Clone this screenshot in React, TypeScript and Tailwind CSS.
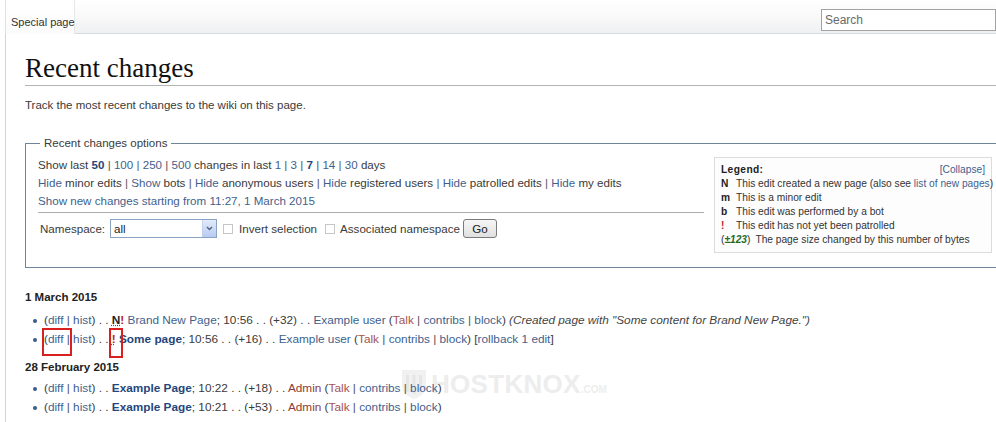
import React from "react";

const LINK = "text-[#3f5f8d]";
const BLINK = "text-[#25467a] font-bold";
const RED = "text-[#a5524f]";
const TXT = "text-[#3a3a3a]";

function Sep() {
  return <span className="text-[#555]"> | </span>;
}

function Bullet() {
  return <span className="absolute left-[8px] top-[8px] w-[4px] h-[4px] rounded-full bg-[#3b5b88]" />;
}

function ChangeItem({ children }: { children: React.ReactNode }) {
  return (
    <li className="relative pl-[19px] leading-[19px] whitespace-nowrap">
      <Bullet />
      {children}
    </li>
  );
}

function UserLinks({ user, red }: { user: string; red?: boolean }) {
  return (
    <>
      <span className={red ? "text-[#8d3b38]" : LINK}>{user}</span>
      <span> (</span>
      <span className={RED}>Talk</span>
      <Sep />
      <span className={LINK}>contribs</span>
      <Sep />
      <span className={LINK}>block</span>
      <span>)</span>
    </>
  );
}

function Shield() {
  return (
    <svg width="28" height="32" viewBox="0 0 28 32">
      <path d="M2 2 H26 V18 C26 25 20 29 14 31 C8 29 2 25 2 18 Z" fill="#f1f1f1" />
      <rect x="6" y="7" width="3" height="17" fill="#e6e6e6" />
      <rect x="12.5" y="7" width="3" height="19" fill="#e6e6e6" />
      <rect x="19" y="7" width="3" height="17" fill="#e6e6e6" />
    </svg>
  );
}

export default function App() {
  return (
    <div className="relative w-[996px] h-[422px] overflow-hidden bg-white font-['Liberation_Sans',Arial,sans-serif] text-[11.5px] text-[#3a3a3a]">
      {/* Watermark (behind content) */}
      <div className="absolute left-[400px] top-[368px] flex items-end pointer-events-none select-none">
        <Shield />
        <span className="ml-[3px] mb-[4px] font-bold text-[26px] leading-[24px] text-[#ededed] tracking-[0.3px]">HOSTKNOX</span>
        <span className="mb-[5px] font-bold text-[10px] leading-[10px] text-[#ededed]">.COM</span>
      </div>

      {/* Header */}
      <div className="relative flex h-[34px]">
        <div className="w-[5px] bg-white" />
        <div className="w-[70px] h-[34px] shrink-0 bg-gradient-to-b from-white to-[#fbfbfb] border-l border-[#cfe6f4] border-r border-r-[#e4e8eb] pl-[5px] pt-[15px] text-[11px] leading-[14px] text-[#333] whitespace-nowrap">
          Special page
        </div>
        <div className="flex-1 flex justify-end bg-gradient-to-b from-white via-[#f9f9f9] to-[#eef0f1] border-b border-[#d3dde3]">
          <div className="mt-[9px] w-[175px] h-[22px] border border-[#a2a2a2] bg-white pl-[3px] text-[12px] leading-[20px] text-[#6a6a6a]">
            Search
          </div>
        </div>
      </div>

      {/* Content */}
      <div className="relative ml-[5px] border-l border-[#b9dcf2] pl-[19px] h-[388px]">
        <h1 className="pt-[17px] font-['Liberation_Serif','Times_New_Roman',serif] text-[27px] leading-[34px] text-[#111] border-b border-[#b4b4b4]">
          Recent changes
        </h1>
        <p className={`mt-[10px] leading-[18px] ${TXT}`}>Track the most recent changes to the wiki on this page.</p>

        <fieldset className="mt-[20px] w-[980px] border border-[#71849a] pl-[12px] pr-[12px] pb-[14px] pt-[3px]">
          <legend className="ml-[2px] px-[4px] leading-[18px] text-[#3a3a3a]">Recent changes options</legend>
          <div className="flex">
            <div className="w-[666px] mt-[1px] text-[11.6px]">
              <div className="leading-[18px] whitespace-nowrap">
                Show last <span className={BLINK}>50</span>
                <Sep />
                <span className={LINK}>100</span>
                <Sep />
                <span className={LINK}>250</span>
                <Sep />
                <span className={LINK}>500</span> changes in last <span className={LINK}>1</span>
                <Sep />
                <span className={LINK}>3</span>
                <Sep />
                <span className={BLINK}>7</span>
                <Sep />
                <span className={LINK}>14</span>
                <Sep />
                <span className={LINK}>30</span> days
              </div>
              <div className="leading-[18px] whitespace-nowrap">
                <span className={LINK}>Hide</span> minor edits
                <Sep />
                <span className={LINK}>Show</span> bots
                <Sep />
                <span className={LINK}>Hide</span> anonymous users
                <Sep />
                <span className={LINK}>Hide</span> registered users
                <Sep />
                <span className={LINK}>Hide</span> patrolled edits
                <Sep />
                <span className={LINK}>Hide</span> my edits
              </div>
              <div className={`leading-[18px] ${LINK}`}>Show new changes starting from 11:27, 1 March 2015</div>
              <div className="mt-[2px] h-px bg-[#acacac]" />
              <div className="mt-[5px] h-[21px] flex items-center pl-[2px]">
                <span className="mr-[5px]">Namespace:</span>
                <div className="flex w-[107px] h-[19px] border border-[#8aa3c0] bg-white">
                  <span className="flex-1 pl-[3px] leading-[17px] text-[#222]">all</span>
                  <span className="w-[14px] h-[17px] flex items-center justify-center bg-gradient-to-b from-[#e3ebfb] to-[#b8cbf2] border-l border-[#c2d1ef]">
                    <svg width="7" height="5" viewBox="0 0 7 5">
                      <path d="M1 1 L3.5 3.5 L6 1" stroke="#4d6185" strokeWidth="1.4" fill="none" />
                    </svg>
                  </span>
                </div>
                <span className="ml-[6px] w-[10px] h-[10px] border border-[#c6c6c6] bg-white" />
                <span className="ml-[6px]">Invert selection</span>
                <span className="ml-[8px] w-[10px] h-[10px] border border-[#c6c6c6] bg-white" />
                <span className="ml-[5px]">Associated namespace</span>
                <span className="ml-[3px] w-[34px] h-[19px] flex items-center justify-center rounded-[3px] border border-[#7a7a7a] bg-gradient-to-b from-[#f6f6f6] to-[#e0e0e0] text-[#222]">
                  Go
                </span>
              </div>
            </div>
            <div className="ml-[10px] mt-[2px] w-[278px] h-[96px] border border-[#dcdcdc] bg-[#fdfdfd] px-[6px] pt-[5px] text-[10.2px] leading-[14px] text-[#333] whitespace-nowrap">
              <div className="flex justify-between">
                <span className="font-bold tracking-[0.4px] text-[#222]">Legend:</span>
                <span className={LINK}>[Collapse]</span>
              </div>
              <div className="flex">
                <span className="w-[15px] shrink-0 font-bold text-[#222]">N</span>
                <span>
                  This edit created a new page (also see <span className={LINK}>list of new pages</span>)
                </span>
              </div>
              <div className="flex">
                <span className="w-[15px] shrink-0 font-bold text-[#222]">m</span>
                <span>This is a minor edit</span>
              </div>
              <div className="flex">
                <span className="w-[15px] shrink-0 font-bold text-[#222]">b</span>
                <span>This edit was performed by a bot</span>
              </div>
              <div className="flex">
                <span className="w-[15px] shrink-0 font-bold text-[#c21d1d]">!</span>
                <span>This edit has not yet been patrolled</span>
              </div>
              <div className="flex">
                <span className="mr-[5px] shrink-0">
                  (<span className="font-bold italic text-[#1f6b1f]">±123</span>)
                </span>
                <span>The page size changed by this number of bytes</span>
              </div>
            </div>
          </div>
        </fieldset>

        <h4 className="mt-[20px] font-bold leading-[18px] text-[#222]">1 March 2015</h4>
        <ul className="mt-[5px] text-[11.8px]">
          <ChangeItem>
            (<span className={LINK}>diff</span>
            <Sep />
            <span className={LINK}>hist</span>) . .{" "}
            <span className="font-bold text-[#222] underline decoration-dotted decoration-[#555]">N</span>
            <span className="font-bold text-[#c21d1d]">!</span> <span className={LINK}>Brand New Page</span>; 10:56 . .
            (+32) . . <UserLinks user="Example user" />{" "}
            <span className="italic text-[#444]">(Created page with "Some content for Brand New Page.")</span>
          </ChangeItem>
          <ChangeItem>
            (<span className={LINK}>diff</span>
            <Sep />
            <span className={LINK}>hist</span>) . .{" "}
            <span className="font-bold text-[#c21d1d] underline decoration-dotted decoration-[#555]">!</span>{" "}
            <span className={BLINK}>Some page</span>; 10:56 . . (+16) . . <UserLinks user="Example user" /> [
            <span className={LINK}>rollback 1 edit</span>]
          </ChangeItem>
        </ul>
        <h4 className="mt-[9px] font-bold leading-[18px] text-[#222]">28 February 2015</h4>
        <ul className="mt-[3px] text-[11.8px]">
          <ChangeItem>
            (<span className={LINK}>diff</span>
            <Sep />
            <span className={LINK}>hist</span>) . . <span className={BLINK}>Example Page</span>; 10:22 . . (+18) . .{" "}
            <UserLinks user="Admin" red />
          </ChangeItem>
          <ChangeItem>
            (<span className={LINK}>diff</span>
            <Sep />
            <span className={LINK}>hist</span>) . . <span className={BLINK}>Example Page</span>; 10:21 . . (+53) . .{" "}
            <UserLinks user="Admin" red />
          </ChangeItem>
        </ul>
      </div>

      {/* Annotation boxes */}
      <div className="absolute left-[42px] top-[328px] w-[30px] h-[28px] border-2 border-[#d9201f]" />
      <div className="absolute left-[109px] top-[328px] w-[14px] h-[30px] border-2 border-[#d9201f]" />
    </div>
  );
}
